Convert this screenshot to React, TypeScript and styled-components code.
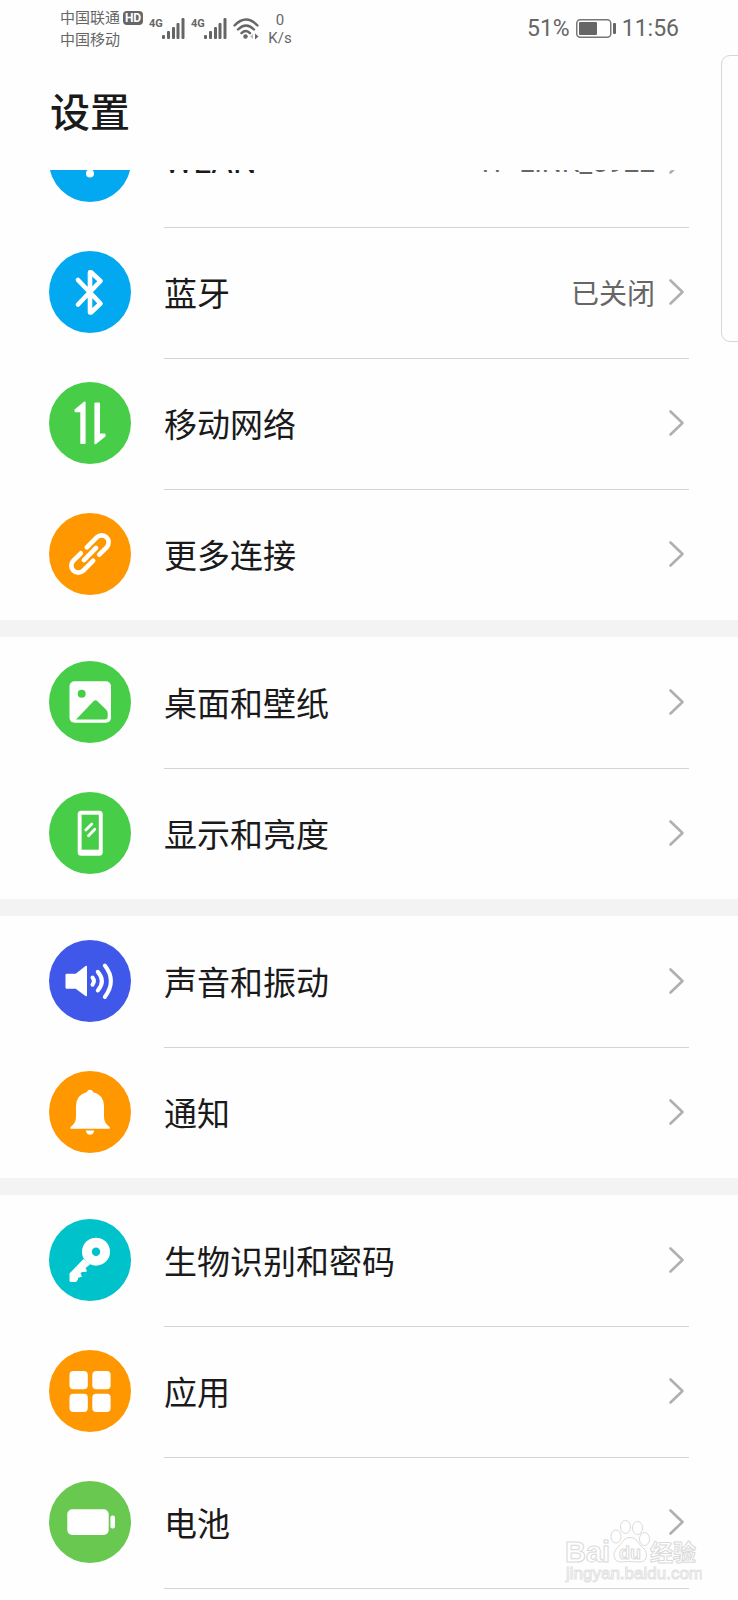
import React from "react";
import styled, { createGlobalStyle } from "styled-components";

const GlobalStyle = createGlobalStyle`
  *, *::before, *::after { box-sizing: border-box; }
  html { background: #fefefe; }
  body {
    margin: 0;
    background: #fefefe;
    color: #1a1a1a;
    font-family: Roboto, "Noto Sans CJK SC", sans-serif;
  }
`;

const Page = styled.main`
  position: relative;
  display: flex;
  flex-direction: column;
  min-height: 100vh;
  overflow: hidden;
`;

const StatusBar = styled.div`
  display: flex;
  align-items: center;
  justify-content: space-between;
  height: 56px;
  padding: 1px 59px 0 60px;
  color: #666;
`;

const StatusGroup = styled.div<{ $gap: number }>`
  display: flex;
  align-items: center;
  gap: ${(p) => p.$gap}px;
`;

const Carriers = styled.div`
  display: flex;
  flex-direction: column;
  font-size: 15px;
  line-height: 22px;
`;

const CarrierLine = styled.div`
  display: flex;
  align-items: center;
  gap: 3px;
`;

const HdBadge = styled.span`
  width: 20px;
  height: 14px;
  border-radius: 4px;
  background: #666;
  color: #fff;
  font-size: 12px;
  font-weight: 700;
  line-height: 14px;
  text-align: center;
`;

const Speed = styled.div`
  width: 30px;
  font-size: 15px;
  line-height: 18px;
  text-align: center;
`;

const Signal = styled.div`
  display: flex;
  align-items: flex-start;
`;

const SignalLabel = styled.span`
  width: 13px;
  font-size: 11px;
  font-weight: 700;
  line-height: 12px;
`;

const StatusText = styled.span`
  font-size: 23px;
  line-height: 28px;
`;

const Header = styled.header`
  height: 114px;
  padding: 28px 50px;
`;

const Title = styled.h1`
  margin: 0;
  font-size: 40px;
  font-weight: 500;
  line-height: 60px;
`;

const Viewport = styled.div`
  flex: 1;
  overflow: hidden;
`;

const Groups = styled.nav`
  margin-top: -74px;
`;

const Group = styled.ul`
  margin: 0;
  padding: 0;
  list-style: none;

  & + & {
    border-top: 17px solid #f3f3f3;
  }
`;

const Item = styled.li``;

const Row = styled.a`
  display: flex;
  align-items: center;
  gap: 33px;
  height: 131px;
  padding: 0 49px 2px;
  color: inherit;
  text-decoration: none;
`;

const RowBody = styled.span`
  display: flex;
  flex: 1;
  align-items: center;
  align-self: stretch;
  padding-right: 4px;
  border-top: 1px solid transparent;

  ${Item} + ${Item} & {
    border-top-color: #d4d4d4;
  }
`;

const Label = styled.span<{ $latin: boolean }>`
  flex: 1;
  padding-top: ${(p) => (p.$latin ? 2 : 6)}px;
  font-size: 33px;
  line-height: 48px;
`;

const Value = styled.span<{ $latin: boolean }>`
  margin-right: 13px;
  padding-top: ${(p) => (p.$latin ? 4 : 6)}px;
  color: #666;
  font-size: 28px;
  line-height: 42px;
`;

const EndRule = styled.hr`
  margin: 0 49px 0 164px;
  border: 0;
  border-top: 1px solid #d4d4d4;
`;

const Disc = styled.span<{ $color: string }>`
  display: block;
  width: 82px;
  height: 82px;
  border-radius: 50%;
  background: ${(p) => p.$color};
`;

const SidePanel = styled.aside`
  position: absolute;
  top: 55px;
  right: -12px;
  width: 29px;
  height: 287px;
  border: 1px solid #d6d6d6;
  border-radius: 9px;
  background: #fefefe;
`;

const Watermark = styled.svg`
  position: absolute;
  right: 36px;
  bottom: 14px;
`;

const SignalBars = () => (
  <svg width="23" height="21" viewBox="0 0 23 21" fill="#666" aria-hidden="true">
    <rect x="0" y="17" width="3" height="4" rx="1" />
    <rect x="5" y="13" width="3" height="8" rx="1" />
    <rect x="10" y="9" width="3" height="12" rx="1" />
    <rect x="14.500" y="5" width="3" height="16" rx="1" />
    <rect x="19.500" y="0" width="3" height="21" rx="1" />
  </svg>
);

const WifiStatus = () => (
  <svg width="26" height="22" viewBox="0 0 26 22" fill="none" stroke="#666" strokeWidth="2.400" strokeLinecap="round" aria-hidden="true">
    <path d="M1.500 7.500Q13 -4.500 24.500 7.500M5 11.500Q13 3.500 21 11.500M8.500 15.200Q13 11 17 15.200" />
    <circle cx="12.500" cy="18.500" r="2.200" fill="#666" stroke="none" />
    <path d="M22 15.500v6l3.500-3z" fill="#666" stroke="none" />
    <path d="M20 16v5l-3-2.500z" fill="#bbb" stroke="none" />
  </svg>
);

const BatteryStatus = () => (
  <svg width="40" height="20" viewBox="0 0 40 20" aria-hidden="true">
    <rect x="0.750" y="0.750" width="34" height="17.500" rx="3.500" fill="#fff" stroke="#777" strokeWidth="1.500" />
    <rect x="3" y="3" width="18" height="13" rx="1" fill="#666" />
    <rect x="37" y="4" width="3" height="11" rx="1" fill="#666" />
  </svg>
);

const Chevron = () => (
  <svg width="17" height="28" viewBox="0 0 17 28" fill="none" stroke="#b0b0b0" strokeWidth="2.600" strokeLinecap="round" strokeLinejoin="round" aria-hidden="true">
    <path d="M2.500 2.500L14.500 14L2.500 25.500" />
  </svg>
);

const line = { fill: "none", stroke: "#fff", strokeLinecap: "round", strokeLinejoin: "round" } as const;

const glyphs: Record<string, (c: string) => React.ReactNode> = {
  wlan: () => (
    <g>
      <path {...line} strokeWidth="5" d="M20 33Q41 14 62 33M28 41Q41 30 54 41" />
      <circle cx="41" cy="53.500" r="4" />
    </g>
  ),
  bluetooth: () => <path {...line} strokeWidth="4.600" d="M29 29L51.500 52.500L42 61.500H41V21.300H42L51.500 30L29 53.500" />,
  network: () => (
    <g stroke="#fff" strokeWidth="2" strokeLinejoin="round">
      <path d="M35.600 20.500V61H32.300V29.200H26.500V28Z" />
      <path d="M46.400 21.500H50V52.500H55.500V54L46.400 61.300Z" />
    </g>
  ),
  link: () => (
    <g {...line} strokeWidth="4.600" transform="rotate(-45 41 41)">
      <path d="M43.500 34H57.500A7 7 0 0 1 57.500 48H47" />
      <path d="M38.500 48H24.500A7 7 0 0 1 24.500 34H35" />
      <path d="M32.500 41H49.500" />
    </g>
  ),
  picture: (c) => (
    <g>
      <rect x="20.500" y="20.300" width="41.500" height="41.500" rx="5" />
      <circle cx="32.700" cy="32.700" r="4" fill={c} />
      <path fill={c} d="M27 58.500L44.500 40.300Q46.500 38.300 48.500 40.300L57 48.500Q58.700 50.200 58.700 52V55.500Q58.700 58.500 55.700 58.500Z" />
    </g>
  ),
  phone: (c) => (
    <g>
      <rect x="28.700" y="18.700" width="25" height="45" rx="3.500" />
      <rect x="32.600" y="22.700" width="17.200" height="35" fill={c} />
      <path {...line} strokeWidth="2.800" d="M36.800 38L42.800 32M39.500 43.700L45.800 37.200" />
    </g>
  ),
  sound: () => (
    <g>
      <path d="M17.700 33.700H26.700L36.500 26Q38 25 38 27V55Q38 57 36.500 56L26.700 48.700H17.700Q16.500 48.700 16.500 47.500V35Q16.500 33.700 17.700 33.700Z" />
      <path {...line} strokeWidth="4" d="M43.500 37.500Q46.300 41 43.500 44.700M48.800 31.800Q57 41 48.800 50.500M55.800 25.600Q68 41 55.800 57" />
    </g>
  ),
  bell: () => (
    <g>
      <path d="M38 21Q38.500 18.700 41 18.700Q43.500 18.700 44 21Q55 24 55 35V46Q55 52 60.700 56V57.700H21.500V56Q27 52 27 46V35Q27 24 38 21Z" />
      <path d="M36.800 59.500H45.200Q44.500 63.700 41 63.700Q37.500 63.700 36.800 59.500Z" />
    </g>
  ),
  key: (c) => (
    <g>
      <path d="M34.500 40L20.500 54.500V61.500Q20.500 63 22 63H27L29 60.500V59L33 57.500L31.500 54.500L33 53L37.500 53V50.500L36.500 49L41 45.500Z" />
      <circle cx="47" cy="32.700" r="14" />
      <circle cx="47" cy="32.700" r="4.200" fill={c} />
    </g>
  ),
  apps: () => (
    <g>
      <rect x="20.500" y="21" width="18.300" height="18.300" rx="4" />
      <rect x="43.300" y="21" width="18.300" height="18.300" rx="4" />
      <rect x="20.500" y="43.700" width="18.300" height="18.300" rx="4" />
      <rect x="43.300" y="43.700" width="18.300" height="18.300" rx="4" />
    </g>
  ),
  battery: () => (
    <g>
      <rect x="18.300" y="28.300" width="41.400" height="25.700" rx="5" />
      <rect x="61.400" y="34.500" width="4.600" height="13" rx="2" />
    </g>
  ),
};

type Entry = { label: string; glyph: string; color: string; value?: string; latin?: boolean };

const groups: Entry[][] = [
  [
    { label: "WLAN", glyph: "wlan", color: "#03a9f0", value: "TP-LINK_5922", latin: true },
    { label: "蓝牙", glyph: "bluetooth", color: "#03a9f0", value: "已关闭" },
    { label: "移动网络", glyph: "network", color: "#47cd47" },
    { label: "更多连接", glyph: "link", color: "#ff9800" },
  ],
  [
    { label: "桌面和壁纸", glyph: "picture", color: "#47cd47" },
    { label: "显示和亮度", glyph: "phone", color: "#47cd47" },
  ],
  [
    { label: "声音和振动", glyph: "sound", color: "#4058ea" },
    { label: "通知", glyph: "bell", color: "#ff9800" },
  ],
  [
    { label: "生物识别和密码", glyph: "key", color: "#00c2cb" },
    { label: "应用", glyph: "apps", color: "#ff9800" },
    { label: "电池", glyph: "battery", color: "#69c84f" },
  ],
];

const SettingsRow = ({ label, glyph, color, value, latin = false }: Entry) => (
  <Item>
    <Row href={`#${glyph}`}>
      <Disc $color={color}>
        <svg width="82" height="82" viewBox="0 0 82 82" fill="#fff" aria-hidden="true">
          {glyphs[glyph](color)}
        </svg>
      </Disc>
      <RowBody>
        <Label $latin={latin}>{label}</Label>
        {value && <Value $latin={latin}>{value}</Value>}
        <Chevron />
      </RowBody>
    </Row>
  </Item>
);

export default function App() {
  return (
    <>
      <GlobalStyle />
      <Page>
        <StatusBar>
          <StatusGroup $gap={6}>
            <Carriers>
              <CarrierLine>
                中国联通<HdBadge>HD</HdBadge>
              </CarrierLine>
              <CarrierLine>中国移动</CarrierLine>
            </Carriers>
            <Signal>
              <SignalLabel>4G</SignalLabel>
              <SignalBars />
            </Signal>
            <Signal>
              <SignalLabel>4G</SignalLabel>
              <SignalBars />
            </Signal>
            <WifiStatus />
            <Speed>
              0<br />
              K/s
            </Speed>
          </StatusGroup>
          <StatusGroup $gap={6}>
            <StatusText>51%</StatusText>
            <BatteryStatus />
            <StatusText>11:56</StatusText>
          </StatusGroup>
        </StatusBar>
        <Header>
          <Title>设置</Title>
        </Header>
        <Viewport>
          <Groups aria-label="设置">
            {groups.map((entries) => (
              <Group key={entries[0].glyph}>
                {entries.map((entry) => (
                  <SettingsRow key={entry.glyph} {...entry} />
                ))}
              </Group>
            ))}
            <EndRule />
          </Groups>
        </Viewport>
        <SidePanel />
        <Watermark width="140" height="70" viewBox="0 0 140 70" fill="#fff" stroke="#dadada" strokeWidth="1">
          <text x="3" y="46" fontFamily="Liberation Sans" fontSize="29" fontWeight="700">Bai</text>
          <ellipse cx="54" cy="20.500" rx="5" ry="6.500" />
          <ellipse cx="63.500" cy="11" rx="5" ry="6.500" />
          <ellipse cx="75.500" cy="12" rx="5" ry="6.500" />
          <ellipse cx="82.500" cy="23" rx="5" ry="6.500" />
          <path d="M68 21.500C74 21.500 75 26 79 30C84 34 86 38 83.500 43C81 47.500 75 45.500 68 45.500C61 45.500 56 47.500 53 43C50.500 38 53 34 57 30C61 26 62 21.500 68 21.500Z" />
          <text x="57" y="43" fontFamily="Liberation Sans" fontSize="18" fontWeight="700">du</text>
          <text x="88" y="45" fontFamily="Noto Sans CJK SC" fontSize="23" fontWeight="700">经验</text>
          <text x="4" y="63" fontFamily="Liberation Sans" fontSize="17" stroke="#e2e2e2">jingyan.baidu.com</text>
        </Watermark>
      </Page>
    </>
  );
}
